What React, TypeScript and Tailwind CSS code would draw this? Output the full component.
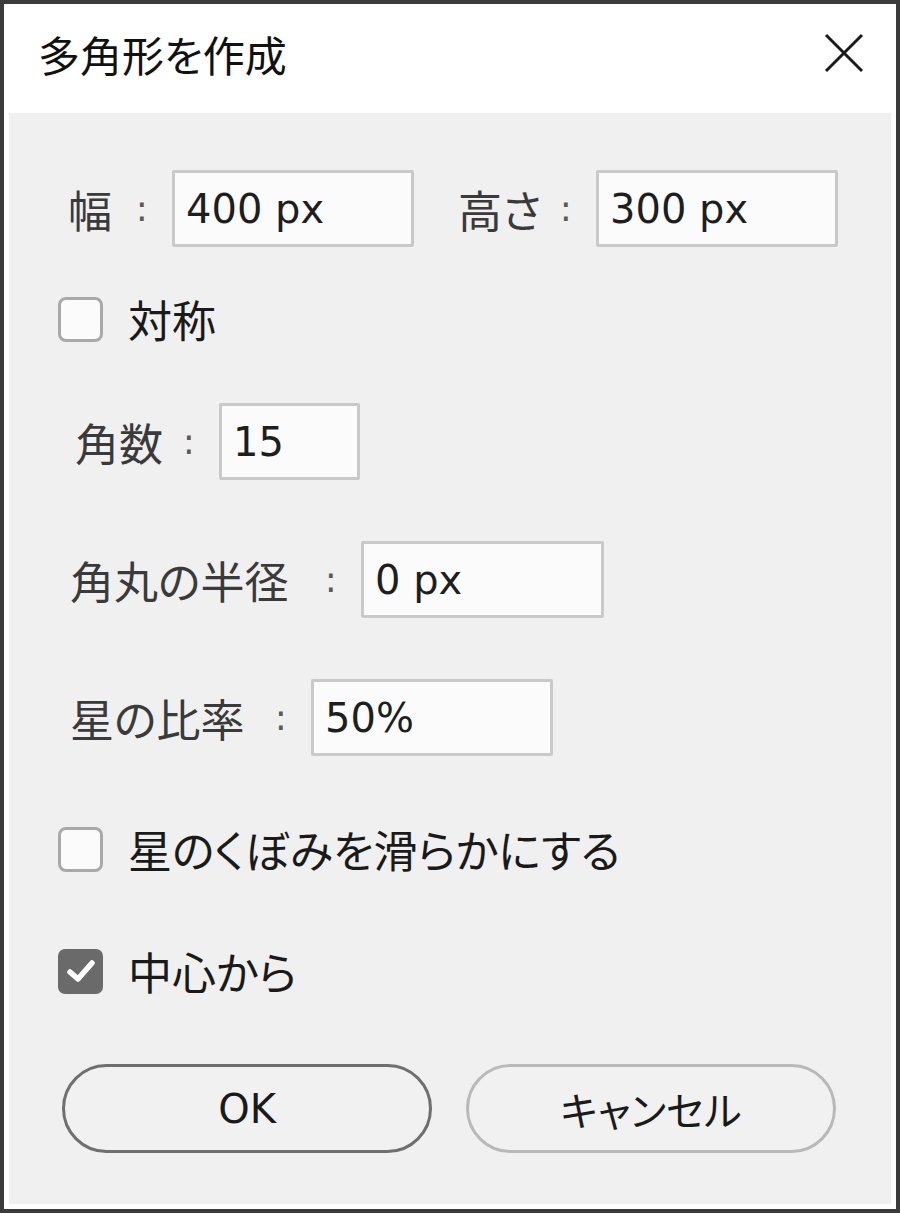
import React from 'react';

const jp = { fontFamily: '"Noto Sans CJK JP", "Noto Sans", sans-serif', fontFeatureSettings: '"palt"' };
const num = { fontFamily: '"DejaVu Sans", "Noto Sans CJK JP", sans-serif' };

const Field = ({ value, width }: { value: string; width: string }) => (
  <div
    className={`${width} h-[77px] border-[3px] border-[#c9c9c9] bg-[#fbfbfb] flex items-center pl-[11px] text-[40px] text-[#1e1e1e] rounded-[2px]`}
    style={num}
  >
    {value}
  </div>
);

const Label = ({ text, width }: { text: string; width: string }) => (
  <div className={`${width} flex items-center justify-between pr-[24px] text-[44px] text-[#3a3a3a]`}>
    <span>{text}</span>
    <span className="text-[#5a5a5a] text-[36px]" style={num}>:</span>
  </div>
);

const Check = ({ checked, label }: { checked?: boolean; label: string }) => (
  <div className="flex items-center h-[44px] pl-[49px]">
    {checked ? (
      <div className="w-[45px] h-[45px] rounded-[7px] bg-[#6a6a6a] flex items-center justify-center">
        <svg width="30" height="26" viewBox="0 0 30 26">
          <path d="M4 14 L12 21 L26 5" fill="none" stroke="#fff" strokeWidth="5.5" strokeLinecap="round" strokeLinejoin="round" />
        </svg>
      </div>
    ) : (
      <div className="w-[45px] h-[45px] rounded-[8px] border-[3px] border-[#a9a9a9] bg-[#fbfbfb]" />
    )}
    <span className="ml-[25px] text-[44px] text-[#1a1a1a]">{label}</span>
  </div>
);

export default function App() {
  return (
    <div className="w-[900px] h-[1213px] bg-[#3b3b3b] p-[4px]" style={jp}>
      <div className="w-full h-full bg-white flex flex-col pb-[5px] px-[5px]">
        {/* Title bar */}
        <div className="h-[109px] flex items-center justify-between shrink-0">
          <span className="ml-[29px] text-[42px] text-[#111] -mt-[10px]">多角形を作成</span>
          <svg width="40" height="40" viewBox="0 0 40 40" className="mr-[27px] -mt-[12px]">
            <path d="M2 2 L38 38 M38 2 L2 38" stroke="#1a1a1a" strokeWidth="3" fill="none" />
          </svg>
        </div>

        {/* Body */}
        <div className="flex-1 bg-[#f0f0f0] flex flex-col">
          <div className="flex items-center h-[77px] mt-[57px] pl-[59px]">
            <Label text="幅" width="w-[104px]" />
            <Field value="400 px" width="w-[242px]" />
            <div className="ml-[44px]">
              <Label text="高さ" width="w-[138px]" />
            </div>
            <Field value="300 px" width="w-[242px]" />
          </div>

          <div className="mt-[50px]">
            <Check label="対称" />
          </div>

          <div className="flex items-center h-[77px] mt-[62px] pl-[66px]">
            <Label text="角数" width="w-[144px]" />
            <Field value="15" width="w-[141px]" />
          </div>

          <div className="flex items-center h-[77px] mt-[61px] pl-[61px]">
            <Label text="角丸の半径" width="w-[291px]" />
            <Field value="0 px" width="w-[243px]" />
          </div>

          <div className="flex items-center h-[77px] mt-[61px] pl-[61px]">
            <Label text="星の比率" width="w-[241px]" />
            <Field value="50%" width="w-[242px]" />
          </div>

          <div className="mt-[71px]">
            <Check label="星のくぼみを滑らかにする" />
          </div>

          <div className="mt-[78px]">
            <Check checked label="中心から" />
          </div>

          <div className="flex mt-[71px] pl-[53px] gap-[34px]">
            <button className="w-[370px] h-[89px] rounded-full border-[3px] border-[#6f6f6f] bg-[#f1f1f1] text-[40px] text-[#1a1a1a]" style={num}>
              OK
            </button>
            <button className="w-[370px] h-[89px] rounded-full border-[3px] border-[#b9b9b9] bg-[#f1f1f1] text-[40px] text-[#1a1a1a]" style={jp}>
              キャンセル
            </button>
          </div>
        </div>
      </div>
    </div>
  );
}
